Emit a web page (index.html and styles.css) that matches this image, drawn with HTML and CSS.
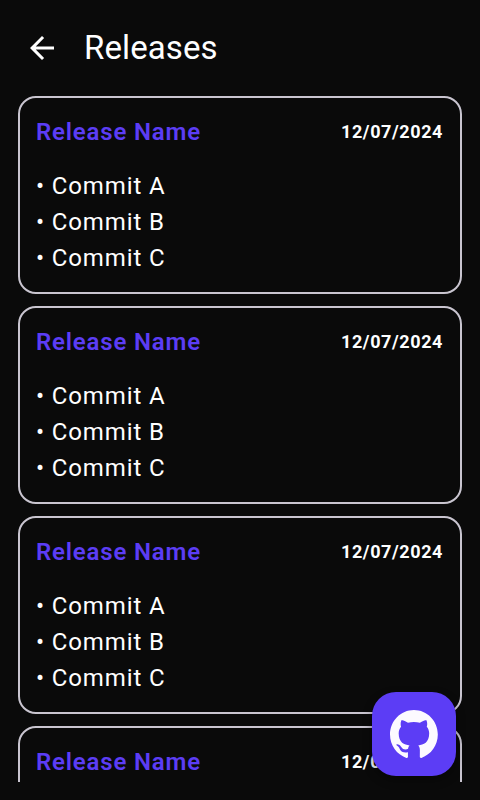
FILE: index.html
```html
<!DOCTYPE html>
<html lang="en">
<head>
<meta charset="utf-8">
<title>Releases</title>
<link rel="stylesheet" href="styles.css">
</head>
<body>
<header class="topbar">
  <svg class="back" viewBox="0 0 24 24"><path d="M20 11H7.83l5.59-5.59L12 4l-8 8 8 8 1.41-1.41L7.83 13H20v-2z"/></svg>
  <h1>Releases</h1>
</header>
<main class="list">
  <article class="card"><div class="head"><h2>Release Name</h2><time>12/07/2024</time></div><p>• Commit A<br>• Commit B<br>• Commit C</p></article>
  <article class="card"><div class="head"><h2>Release Name</h2><time>12/07/2024</time></div><p>• Commit A<br>• Commit B<br>• Commit C</p></article>
  <article class="card"><div class="head"><h2>Release Name</h2><time>12/07/2024</time></div><p>• Commit A<br>• Commit B<br>• Commit C</p></article>
  <article class="card"><div class="head"><h2>Release Name</h2><time>12/07/2024</time></div></article>
</main>
<a class="fab" aria-label="GitHub"><svg viewBox="0 0 98 96" preserveAspectRatio="none"><path fill-rule="evenodd" clip-rule="evenodd" d="M48.854 0C21.839 0 0 22 0 49.217c0 21.756 13.993 40.172 33.405 46.69 2.427.49 3.316-1.059 3.316-2.362 0-1.141-.08-5.052-.08-9.127-13.59 2.934-16.42-5.867-16.42-5.867-2.184-5.704-5.42-7.17-5.42-7.17-4.448-3.015.324-3.015.324-3.015 4.934.326 7.523 5.052 7.523 5.052 4.367 7.496 11.404 5.378 14.235 4.074.404-3.178 1.699-5.378 3.074-6.6-10.839-1.141-22.243-5.378-22.243-24.283 0-5.378 1.94-9.778 5.014-13.2-.485-1.222-2.184-6.275.486-13.038 0 0 4.125-1.304 13.426 5.052a46.97 46.97 0 0 1 12.214-1.63c4.125 0 8.33.571 12.213 1.63 9.302-6.356 13.427-5.052 13.427-5.052 2.67 6.763.97 11.816.485 13.038 3.155 3.422 5.015 7.822 5.015 13.2 0 18.905-11.404 23.06-22.324 24.283 1.78 1.548 3.316 4.481 3.316 9.126 0 6.6-.08 11.897-.08 13.526 0 1.304.89 2.853 3.316 2.364 19.412-6.52 33.405-24.935 33.405-46.691C97.707 22 75.788 0 48.854 0z"/></svg></a>
</body>
</html>
```
FILE: styles.css
```css
* { box-sizing: border-box; }
body {
  margin: 0;
  height: 800px;
  overflow: hidden;
  display: flex;
  flex-direction: column;
  background: #0a0a0a;
  color: #fff;
  font-family: Roboto, sans-serif;
}
.topbar {
  height: 96px;
  flex: none;
  display: flex;
  align-items: center;
  padding-left: 24px;
  gap: 24px;
}
.back { width: 36px; height: 36px; fill: #fff; }
h1 { margin: 0; padding-bottom: 2px; font-size: 33px; font-weight: 400; letter-spacing: .1px; }
.list {
  height: 686px;
  overflow: hidden;
  padding: 0 18px;
  display: flex;
  flex-direction: column;
  gap: 12px;
}
.card {
  flex: none;
  height: 198px;
  border: 2px solid #c9c5d0;
  border-radius: 18px;
  padding: 16px;
}
.head {
  display: flex;
  align-items: center;
  justify-content: space-between;
  height: 36px;
}
h2 { margin: 0; font-size: 24px; font-weight: 600; letter-spacing: .82px; color: #5c3df5; }
time { padding-bottom: 2px; font-size: 18px; font-weight: 700; letter-spacing: .6px; margin-right: 1px; }
p { margin: 18px 0 0; font-size: 24px; line-height: 36px; letter-spacing: .87px; }
.fab {
  position: absolute;
  left: 372px;
  top: 692px;
  width: 84px;
  height: 84px;
  border-radius: 24px;
  background: #5c3df5;
  box-shadow: 0 4px 10px rgba(0, 0, 0, .4);
  display: flex;
  align-items: center;
  justify-content: center;
}
.fab svg { width: 48px; height: 48px; fill: #fcfaff; }
```
